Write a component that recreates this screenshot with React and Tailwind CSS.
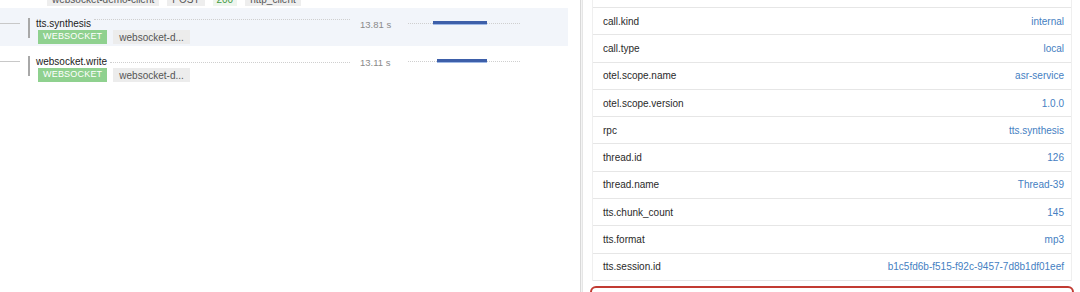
import React from "react";

const font = { fontFamily: '"Liberation Sans", Arial, sans-serif' };

function SpanRow({ name, highlight, dotOffset, barLeft, barWidth }) {
  return (
    <div className={`flex h-[38px] items-start ${highlight ? "bg-[#f2f5fa]" : "bg-white"}`}>
      <div className="w-[28px] shrink-0 pt-[15px]">
        <div className="h-px w-[20px] bg-[#c8c8c8]" />
      </div>
      <div className="mt-[10px] h-[20px] w-[2px] shrink-0 bg-[#a8a8a8]" />
      <div className="ml-[6px] w-[314px] shrink-0 pt-[10px]">
        <div className="flex h-[12px] items-start">
          <span className="text-[10px] leading-[12px] text-[#222]">{name}</span>
          <div
            className="ml-[3px] flex-1 border-t border-dotted border-[#cfcfcf]"
            style={{ marginTop: dotOffset }}
          />
        </div>
        <div className="ml-[2px] flex gap-[6px]">
          <span className="flex h-[14px] items-center bg-[#8fd18f] px-[5px] text-[9px] tracking-[0.2px] text-white">
            WEBSOCKET
          </span>
          <span className="flex h-[14px] items-center bg-[#ececec] px-[6px] text-[10px] text-[#555]">
            websocket-d...
          </span>
        </div>
      </div>
      <div className="ml-[10px] w-[48px] shrink-0 pt-[11px] text-[9.5px] leading-[12px] text-[#8a8a8a]">
        {name === "tts.synthesis" ? "13.81 s" : "13.11 s"}
      </div>
      <div className="mt-[13px] flex h-[4px] w-[112px] shrink-0 items-center">
        <div className="border-t border-dotted border-[#cfcfcf]" style={{ width: barLeft }} />
        <div
          className="h-[4px] shrink-0 border-b border-[#9fb9e6] bg-[#3d5fa9]"
          style={{ width: barWidth }}
        />
        <div className="flex-1 border-t border-dotted border-[#cfcfcf]" />
      </div>
    </div>
  );
}

const attrs = [
  ["call.kind", "internal"],
  ["call.type", "local"],
  ["otel.scope.name", "asr-service"],
  ["otel.scope.version", "1.0.0"],
  ["rpc", "tts.synthesis"],
  ["thread.id", "126"],
  ["thread.name", "Thread-39"],
  ["tts.chunk_count", "145"],
  ["tts.format", "mp3"],
  ["tts.session.id", "b1c5fd6b-f515-f92c-9457-7d8b1df01eef"],
];

export default function App() {
  return (
    <div className="flex h-[292px] w-[1080px] overflow-hidden bg-white" style={font}>
      <div className="w-[580px] shrink-0 pr-[12px]">
        <div className="h-[8px] overflow-hidden">
          <div className="-mt-[8px] ml-[47px] flex gap-[8px]">
            <span className="flex h-[14px] items-center bg-[#eeeeee] px-[5px] text-[10px] text-[#555]">
              websocket-demo-client
            </span>
            <span className="flex h-[14px] items-center bg-[#eeeeee] px-[5px] text-[10px] text-[#555]">
              POST
            </span>
            <span className="flex h-[14px] items-center bg-[#eef5ee] px-[4px] text-[10px] text-[#3f9a3f]">
              200
            </span>
            <span className="flex h-[14px] items-center bg-[#eeeeee] px-[5px] text-[10px] text-[#555]">
              http_client
            </span>
          </div>
        </div>
        <SpanRow name="tts.synthesis" highlight dotOffset={1} barLeft={25} barWidth={54} />
        <SpanRow name="websocket.write" dotOffset={6} barLeft={29} barWidth={50} />
      </div>
      <div className="flex w-[3px] shrink-0">
        <div className="w-px bg-[#d9d9d9]" />
        <div className="w-px bg-[#f4f4f4]" />
        <div className="w-px bg-[#e6e6e6]" />
      </div>
      <div className="flex-1 pl-[9px] pr-[8px]">
        <div className="border-x border-[#efefef]">
          <div className="h-[8px] border-b border-[#e6e6e6]" />
          {attrs.map(([k, v]) => (
            <div
              key={k}
              className="flex h-[27.3px] items-center justify-between border-b border-[#e6e6e6] pl-[10px] pr-[7px] text-[10px]"
            >
              <span className="text-[#2a2a2a]">{k}</span>
              <span className="text-[#4580c2]">{v}</span>
            </div>
          ))}
        </div>
        <div className="-mx-[2px] mt-[5px] flex h-[30px] items-start justify-between rounded-[6px] border-2 border-[#c23b32] px-[10px] pt-[1px] text-[10px]">
          <span className="text-[#2a2a2a]">tts.first_chunk_latency_ms</span>
          <span className="text-[#4580c2]">84</span>
        </div>
      </div>
    </div>
  );
}
